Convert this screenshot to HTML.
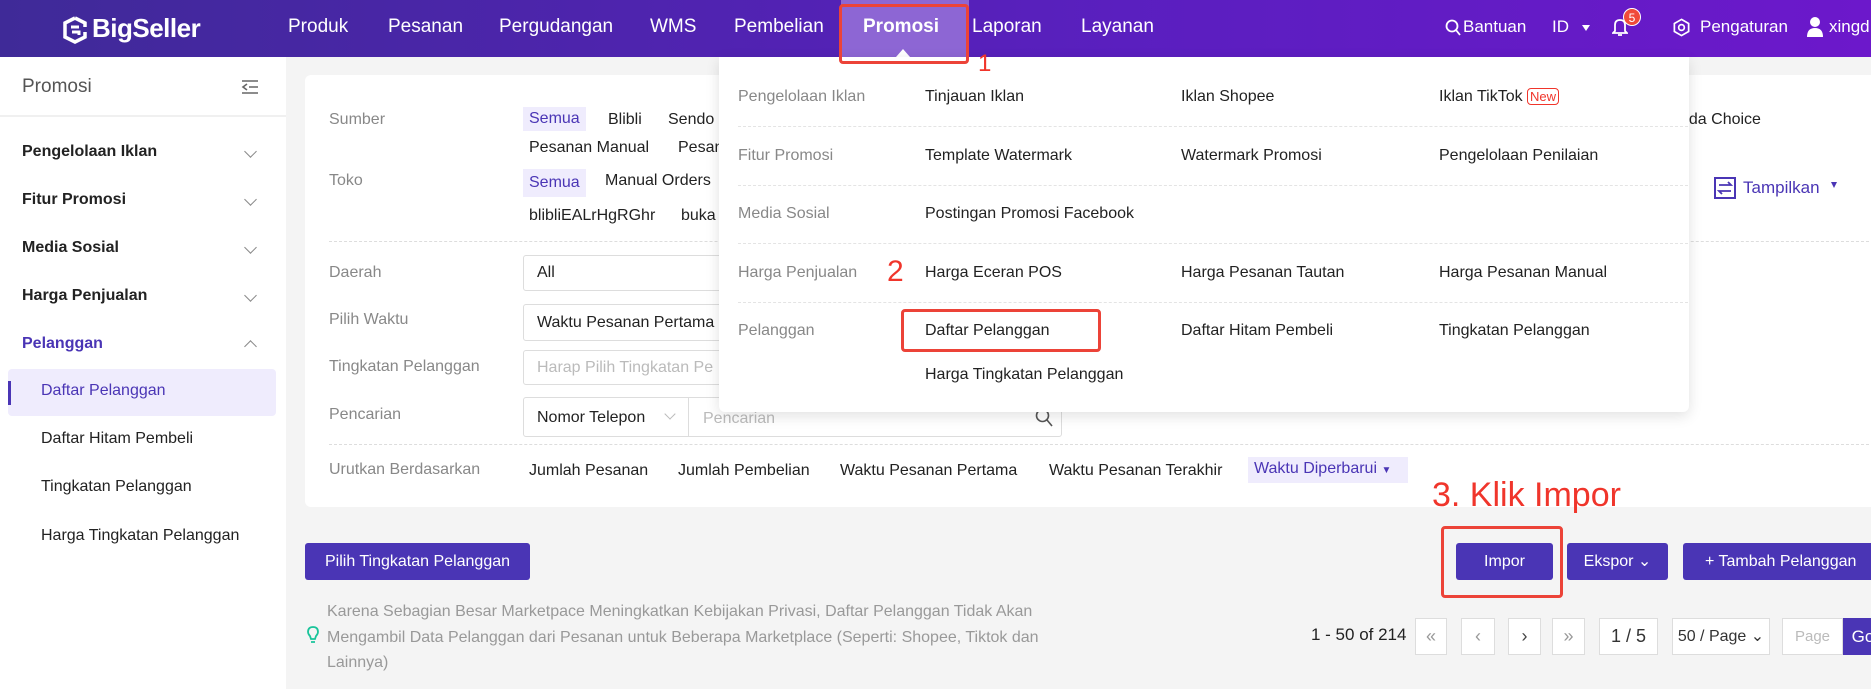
<!DOCTYPE html>
<html><head><meta charset="utf-8"><style>
*{box-sizing:border-box;margin:0;padding:0}
body{width:1871px;height:689px;overflow:hidden;background:#f4f4f4;font-family:"Liberation Sans",sans-serif;font-size:16px;color:#222;position:relative}
.a{position:absolute;white-space:nowrap}
.hdr{position:absolute;left:0;top:0;width:1871px;height:57px;background:linear-gradient(90deg,#3f2a98,#5a1fbf 60%,#6c18cb)}
.nav{color:#fff;font-size:19px;top:16px}
.side{position:absolute;left:0;top:57px;width:286px;height:632px;background:#fff}
.mi{font-weight:bold;font-size:16px;color:#222;left:22px}
.chev{left:246px;width:9px;height:9px;border-right:1.5px solid #888;border-bottom:1.5px solid #888;transform:rotate(45deg)}
.card{position:absolute;left:305px;top:75px;width:1580px;height:432px;background:#fff;border-radius:6px}
.lbl{color:#888;font-size:16px;left:329px}
.chip{background:#efecfd;color:#4a35b5;padding:3px 6px}
.inp{position:absolute;border:1px solid #ddd;border-radius:3px;background:#fff}
.dd{position:absolute;left:719px;top:57px;width:970px;height:355px;background:#fff;box-shadow:0 4px 14px rgba(0,0,0,.12);border-radius:0 0 6px 6px}
.cat{color:#888;left:19px}
.sep{position:absolute;left:19px;width:950px;border-top:1px dashed #e4e4e4}
.btn{position:absolute;background:#4a35b5;color:#fff;border-radius:3px;font-size:16px;text-align:center}
.red{color:#f0352b}
.rbox{position:absolute;border:3px solid #ec4338;border-radius:4px}
.pg{position:absolute;top:618px;height:37px;border:1px solid #ddd;background:#fff;color:#999;text-align:center;line-height:35px;font-size:18px}
</style></head><body>
<div class="hdr"></div>
<svg class="a" style="left:62px;top:16px" width="26" height="28" viewBox="0 0 26 28"><path d="M13 2 L23 7 L23 11 M23 16 L23 21 L13 26 L3 21 L3 7 L13 2" fill="none" stroke="#fff" stroke-width="3.5"/><path d="M9 11 L17 11 M10 16 L17 16 L17 19" fill="none" stroke="#fff" stroke-width="3"/></svg>
<div class="a" style="left:92px;top:13px;color:#fff;font-size:26px;font-weight:bold;letter-spacing:-0.5px">BigSeller</div>
<div style="position:absolute;left:841px;top:0;width:128px;height:57px;background:#8d66d4"></div>
<div class="a" style="left:896px;top:49px;width:0;height:0;border-left:7px solid transparent;border-right:7px solid transparent;border-bottom:8px solid #fff"></div>
<div class="a nav" style="left:288px">Produk</div>
<div class="a nav" style="left:388px">Pesanan</div>
<div class="a nav" style="left:499px">Pergudangan</div>
<div class="a nav" style="left:650px">WMS</div>
<div class="a nav" style="left:734px">Pembelian</div>
<div class="a nav" style="left:863px;font-weight:bold">Promosi</div>
<div class="a nav" style="left:972px">Laporan</div>
<div class="a nav" style="left:1081px">Layanan</div>
<svg class="a" style="left:1445px;top:19px" width="16" height="18" viewBox="0 0 16 18"><circle cx="7" cy="7" r="5.5" fill="none" stroke="#fff" stroke-width="1.8"/><path d="M11 11 L15 16" stroke="#fff" stroke-width="1.8"/></svg>
<div class="a nav" style="left:1463px;font-size:17px;top:17px">Bantuan</div>
<div class="a nav" style="left:1552px;font-size:17px;top:17px">ID</div>
<div class="a" style="left:1582px;top:25px;border-left:4px solid transparent;border-right:4px solid transparent;border-top:6px solid #fff"></div>
<svg class="a" style="left:1612px;top:17px" width="16" height="20" viewBox="0 0 16 20"><path d="M3 14 L3 8 Q3 3 8 3 Q13 3 13 8 L13 14 L15 16 L1 16 Z M6 18 L10 18" fill="none" stroke="#fff" stroke-width="1.8"/></svg>
<div class="a" style="left:1623px;top:8px;width:18px;height:18px;border-radius:9px;background:#f04a3a;color:#fff;font-size:12px;text-align:center;line-height:18px;border:1px solid #fff">5</div>
<svg class="a" style="left:1672px;top:18px" width="19" height="19" viewBox="0 0 20 20"><circle cx="10" cy="10" r="3" fill="none" stroke="#fff" stroke-width="1.8"/><path d="M10 1.5 L17.5 5.8 L17.5 14.2 L10 18.5 L2.5 14.2 L2.5 5.8 Z" fill="none" stroke="#fff" stroke-width="1.8"/></svg>
<div class="a nav" style="left:1700px;font-size:17px;top:17px">Pengaturan</div>
<svg class="a" style="left:1806px;top:16px" width="18" height="22" viewBox="0 0 18 22"><circle cx="9" cy="6" r="5" fill="#fff"/><path d="M1 21 Q1 12 9 12 Q17 12 17 21 Z" fill="#fff"/></svg>
<div class="a nav" style="left:1829px;font-size:17px;top:17px">xingd</div>

<div class="side"></div>
<div class="a" style="left:22px;top:76px;font-size:19px;color:#555">Promosi</div>
<svg class="a" style="left:241px;top:79px" width="18" height="16" viewBox="0 0 18 16"><path d="M1 2 H17 M8 8 H17 M1 14 H17 M6 5 L2 8 L6 11" fill="none" stroke="#666" stroke-width="1.6"/></svg>
<div class="a" style="left:0;top:115px;width:286px;height:2px;background:#f0f0f0"></div>
<div class="a mi" style="top:143px">Pengelolaan Iklan</div><div class="a chev" style="top:147px"></div>
<div class="a mi" style="top:191px">Fitur Promosi</div><div class="a chev" style="top:195px"></div>
<div class="a mi" style="top:239px">Media Sosial</div><div class="a chev" style="top:243px"></div>
<div class="a mi" style="top:287px">Harga Penjualan</div><div class="a chev" style="top:291px"></div>
<div class="a mi" style="top:335px;color:#4a35b5">Pelanggan</div><div class="a chev" style="top:342px;transform:rotate(225deg)"></div>
<div class="a" style="left:8px;top:369px;width:268px;height:47px;background:#efecfd;border-radius:4px"></div>
<div class="a" style="left:8px;top:381px;width:3px;height:24px;background:#4a35b5"></div>
<div class="a" style="left:41px;top:382px;color:#4a35b5">Daftar Pelanggan</div>
<div class="a" style="left:41px;top:430px">Daftar Hitam Pembeli</div>
<div class="a" style="left:41px;top:478px">Tingkatan Pelanggan</div>
<div class="a" style="left:41px;top:527px">Harga Tingkatan Pelanggan</div>

<div class="card"></div>
<div class="a lbl" style="top:111px">Sumber</div>
<div class="a chip" style="left:523px;top:107px">Semua</div>
<div class="a" style="left:608px;top:111px">Blibli</div>
<div class="a" style="left:668px;top:111px">Sendo</div>
<div class="a" style="left:529px;top:139px">Pesanan Manual</div>
<div class="a" style="left:678px;top:139px">Pesan</div>
<div class="a" style="left:1680px;top:111px">nda Choice</div>
<div class="a lbl" style="top:172px">Toko</div>
<div class="a chip" style="left:523px;top:169px;padding:5px 6px">Semua</div>
<div class="a" style="left:605px;top:172px">Manual Orders</div>
<div class="a" style="left:529px;top:207px">blibliEALrHgRGhr</div>
<div class="a" style="left:681px;top:207px">buka</div>
<svg class="a" style="left:1714px;top:177px" width="22" height="22" viewBox="0 0 22 22"><rect x="1" y="1" width="20" height="20" fill="none" stroke="#4a35b5" stroke-width="2"/><path d="M5 8 H17 L14 5 M17 14 H5 L8 17" fill="none" stroke="#4a35b5" stroke-width="1.8"/></svg>
<div class="a" style="left:1743px;top:178px;color:#4a35b5;font-size:17px">Tampilkan</div>
<div class="a" style="left:1831px;top:182px;border-left:3.5px solid transparent;border-right:3.5px solid transparent;border-top:6px solid #4a35b5"></div>
<div class="a" style="left:329px;top:241px;width:1540px;border-top:1px dashed #ddd"></div>
<div class="a lbl" style="top:264px">Daerah</div>
<div class="inp" style="left:523px;top:255px;width:400px;height:36px"></div>
<div class="a" style="left:537px;top:264px">All</div>
<div class="a lbl" style="top:311px">Pilih Waktu</div>
<div class="inp" style="left:523px;top:304px;width:400px;height:37px"></div>
<div class="a" style="left:537px;top:314px">Waktu Pesanan Pertama</div>
<div class="a lbl" style="top:358px">Tingkatan Pelanggan</div>
<div class="inp" style="left:523px;top:350px;width:400px;height:35px"></div>
<div class="a" style="left:537px;top:359px;color:#bbb">Harap Pilih Tingkatan Pe</div>
<div class="a lbl" style="top:406px">Pencarian</div>
<div class="inp" style="left:523px;top:397px;width:539px;height:40px"></div>
<div class="a" style="left:688px;top:398px;height:38px;border-left:1px solid #ddd"></div>
<div class="a" style="left:537px;top:409px">Nomor Telepon</div>
<div class="a" style="left:666px;top:410px;width:8px;height:8px;border-right:1px solid #bbb;border-bottom:1px solid #bbb;transform:rotate(45deg)"></div>
<div class="a" style="left:703px;top:410px;color:#bbb">Pencarian</div>
<svg class="a" style="left:1035px;top:408px" width="18" height="20" viewBox="0 0 18 20"><circle cx="7.5" cy="7.5" r="6" fill="none" stroke="#555" stroke-width="1.6"/><path d="M12 12 L17 18" stroke="#555" stroke-width="1.6"/></svg>
<div class="a" style="left:329px;top:444px;width:1540px;border-top:1px dashed #ddd"></div>
<div class="a lbl" style="top:461px">Urutkan Berdasarkan</div>
<div class="a" style="left:529px;top:462px">Jumlah Pesanan</div>
<div class="a" style="left:678px;top:462px">Jumlah Pembelian</div>
<div class="a" style="left:840px;top:462px">Waktu Pesanan Pertama</div>
<div class="a" style="left:1049px;top:462px">Waktu Pesanan Terakhir</div>
<div class="a chip" style="left:1248px;top:457px;width:160px;height:26px;padding:3px 6px">Waktu Diperbarui <span style="font-size:10px">▼</span></div>

<div class="dd">
<div class="a cat" style="top:31px">Pengelolaan Iklan</div>
<div class="a" style="left:206px;top:31px">Tinjauan Iklan</div>
<div class="a" style="left:462px;top:31px">Iklan Shopee</div>
<div class="a" style="left:720px;top:31px">Iklan TikTok <span style="color:#f0352b;border:1px solid #f0352b;border-radius:4px;font-size:13px;padding:0 2px">New</span></div>
<div class="sep" style="top:69px"></div>
<div class="a cat" style="top:90px">Fitur Promosi</div>
<div class="a" style="left:206px;top:90px">Template Watermark</div>
<div class="a" style="left:462px;top:90px">Watermark Promosi</div>
<div class="a" style="left:720px;top:90px">Pengelolaan Penilaian</div>
<div class="sep" style="top:128px"></div>
<div class="a cat" style="top:148px">Media Sosial</div>
<div class="a" style="left:206px;top:148px">Postingan Promosi Facebook</div>
<div class="sep" style="top:186px"></div>
<div class="a cat" style="top:207px">Harga Penjualan</div>
<div class="a red" style="left:168px;top:198px;font-size:30px">2</div>
<div class="a" style="left:206px;top:207px">Harga Eceran POS</div>
<div class="a" style="left:462px;top:207px">Harga Pesanan Tautan</div>
<div class="a" style="left:720px;top:207px">Harga Pesanan Manual</div>
<div class="sep" style="top:245px"></div>
<div class="a cat" style="top:265px">Pelanggan</div>
<div class="a" style="left:206px;top:265px">Daftar Pelanggan</div>
<div class="a" style="left:462px;top:265px">Daftar Hitam Pembeli</div>
<div class="a" style="left:720px;top:265px">Tingkatan Pelanggan</div>
<div class="a" style="left:206px;top:309px">Harga Tingkatan Pelanggan</div>
<div class="rbox" style="left:182px;top:252px;width:200px;height:43px"></div>
</div>
<div class="rbox" style="left:839px;top:4px;width:130px;height:60px"></div>
<div class="a red" style="left:978px;top:50px;font-size:24px">1</div>

<div class="btn" style="left:305px;top:543px;width:225px;height:37px;line-height:37px">Pilih Tingkatan Pelanggan</div>
<div class="a" style="left:327px;top:599px;color:#999;line-height:25.5px;white-space:normal;width:760px">Karena Sebagian Besar Marketpace Meningkatkan Kebijakan Privasi, Daftar Pelanggan Tidak Akan Mengambil Data Pelanggan dari Pesanan untuk Beberapa Marketplace (Seperti: Shopee, Tiktok dan Lainnya)</div>
<svg class="a" style="left:307px;top:626px" width="12" height="18" viewBox="0 0 12 18"><path d="M3 10 Q1 8 1 6 Q1 1 6 1 Q11 1 11 6 Q11 8 9 10 L8 13 L4 13 Z M4 16 H8" fill="none" stroke="#19c49a" stroke-width="1.8"/></svg>
<div class="a red" style="left:1432px;top:476px;font-size:34px">3. Klik Impor</div>
<div class="btn" style="left:1456px;top:543px;width:97px;height:37px;line-height:37px">Impor</div>
<div class="rbox" style="left:1441px;top:526px;width:122px;height:72px"></div>
<div class="btn" style="left:1567px;top:543px;width:101px;height:37px;line-height:37px">Ekspor ⌄</div>
<div class="btn" style="left:1683px;top:543px;width:200px;height:37px;line-height:37px;text-align:left;padding-left:22px">+ Tambah Pelanggan</div>
<div class="a" style="left:1311px;top:625px;font-size:17px">1 - 50 of 214</div>
<div class="pg" style="left:1415px;width:32px">«</div>
<div class="pg" style="left:1461px;width:34px">‹</div>
<div class="pg" style="left:1508px;width:33px;color:#444">›</div>
<div class="pg" style="left:1552px;width:33px">»</div>
<div class="pg" style="left:1599px;width:59px;color:#333">1 / 5</div>
<div class="pg" style="left:1672px;width:98px;color:#333;font-size:16px">50 / Page ⌄</div>
<div class="pg" style="left:1782px;width:61px;color:#bbb;font-size:15px">Page</div>
<div class="pg" style="left:1843px;width:40px;background:#4a35b5;border-color:#4a35b5;color:#fff;font-size:17px">Go</div>
</body></html>
